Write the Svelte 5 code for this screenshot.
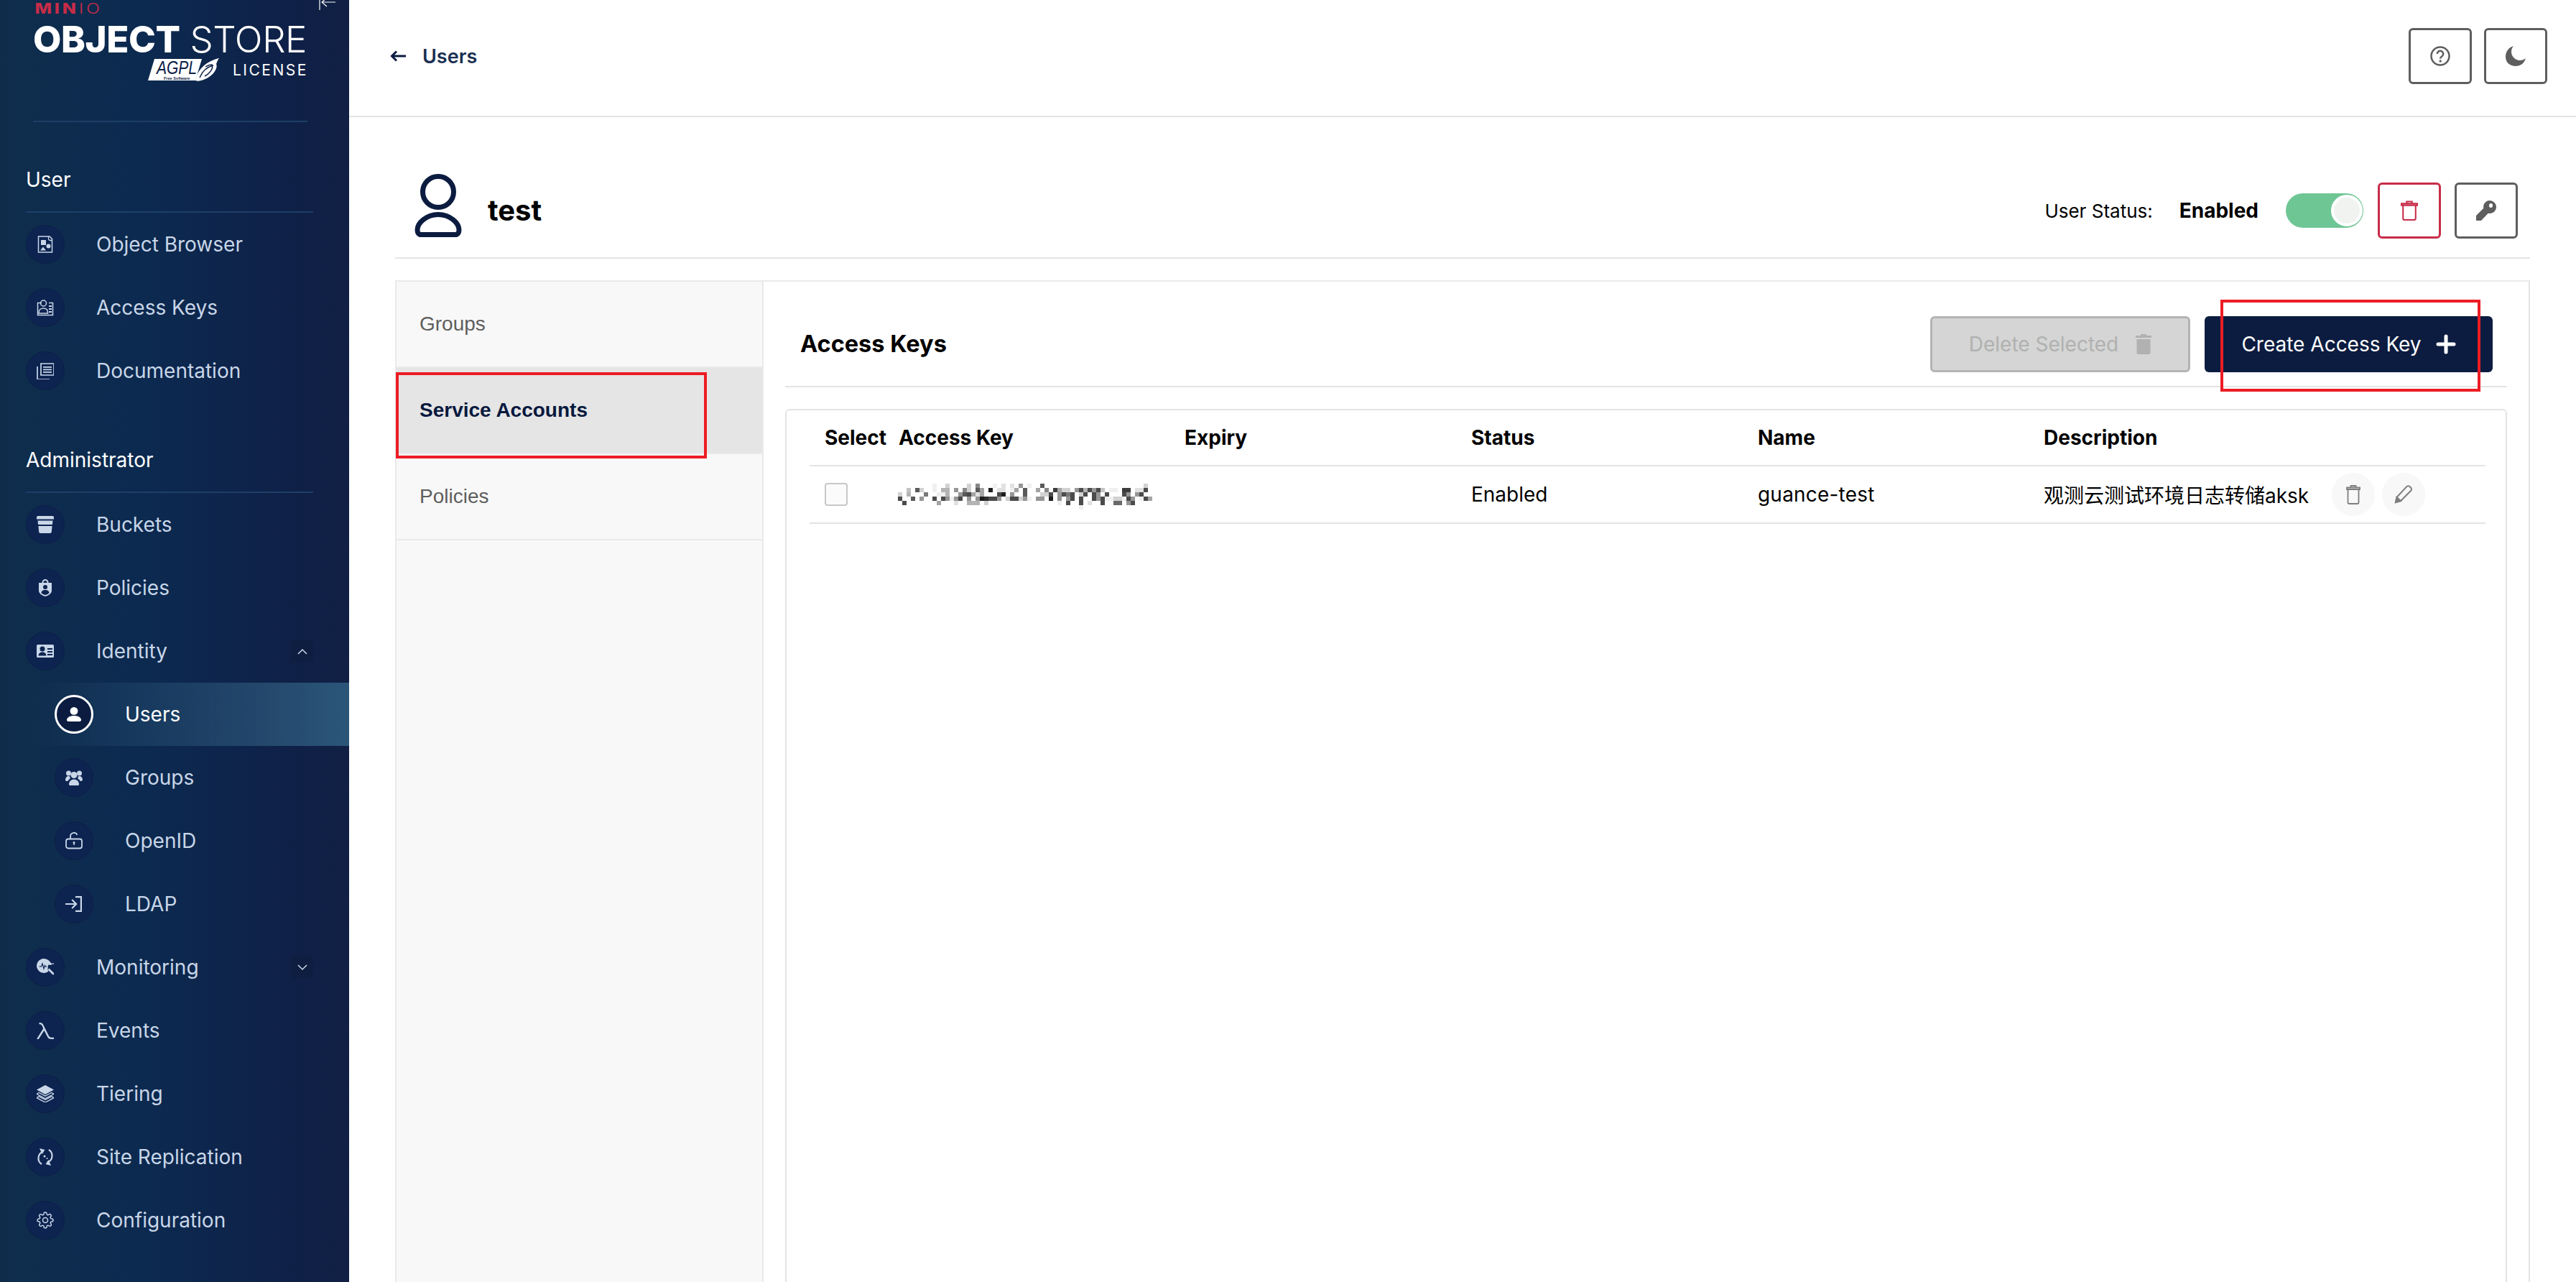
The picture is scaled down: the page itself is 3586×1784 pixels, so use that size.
<script>
  const icons = {
    object: `<path d="M2.5 1h15.5l3.5 3.5V23h-19z" fill="none" stroke="currentColor" stroke-width="1.5"/><path d="M16.5 1v3a2.5 2.5 0 0 0 2.5 2.5h2.5" fill="none" stroke="currentColor" stroke-width="1.3"/><rect x="6" y="6" width="7" height="7"/><circle cx="16.5" cy="14.5" r="3"/><path d="M5 20.5l4-5 4 5z"/>`,
    keys: `<path d="M7 5.500H1.500v17h21v-17H17" fill="none" stroke="currentColor" stroke-width="1.5"/><circle cx="9.500" cy="6" r="4" fill="none" stroke="currentColor" stroke-width="1.5"/><path d="M3 19c0-4 3-6 6.500-6s6 2 6 6v1H3z" fill="none" stroke="currentColor" stroke-width="1.5"/><path d="M17 9h4v2h-4zM17 13h4v2h-4zM17 17h4v2h-4z"/>`,
    docs: `<path d="M6 2h18v16H6z" fill="none" stroke="currentColor" stroke-width="1.700"/><path d="M9 6h12v1.800H9zM9 9.500h12v1.800H9zM9 13h12v1.800H9z"/><path d="M1 6v18h17" fill="none" stroke="currentColor" stroke-width="1.700"/>`,
    buckets: `<path d="M0 2a2 2 0 0 1 2-2h20a2 2 0 0 1 2 2v2.500H0z"/><path d="M1.500 6.500h21l-.6 5.500H2.100z"/><path d="M2.400 14h19.200l-.8 8a2 2 0 0 1-2 2H5.200a2 2 0 0 1-2-2z"/>`,
    policies: `<path fill-rule="evenodd" d="M7.500 5V4.500a4.500 4.500 0 0 1 9 0V5H21v11c0 4-5 7-9 8-4-1-9-4-9-8V5zm2 0h5v-.5a2.500 2.500 0 0 0-5 0zM12 8a3 3 0 1 0 0 6 3 3 0 0 0 0-6zm-5.500 11c1 1.500 3.500 2.500 5.500 3 2-.5 4.500-1.500 5.500-3 0-2.500-2.500-4-5.500-4s-5.500 1.500-5.500 4z"/>`,
    identity: `<path fill-rule="evenodd" d="M1.500 3h21A1.500 1.500 0 0 1 24 4.500v15a1.500 1.500 0 0 1-1.500 1.500h-21A1.500 1.500 0 0 1 0 19.500v-15A1.500 1.500 0 0 1 1.500 3zM8 5.500a3.500 3.500 0 1 0 0 7 3.500 3.500 0 0 0 0-7zM2.500 18.500h11c0-3-2.500-5-5.500-5s-5.500 2-5.500 5zM15 8v2h7V8zm0 4v2h7v-2zm0 4v2h7v-2z"/>`,
    user: `<circle cx="12" cy="6.500" r="6.500"/><path d="M2.500 24c-1.500 0-2.500-1-2.500-2.300C0 17 5.500 14.500 12 14.500s12 2.500 12 7.200c0 1.300-1 2.300-2.500 2.300z"/>`,
    groups: `<circle cx="12" cy="8.500" r="4.500"/><path d="M5 21.500c0-4 3-7 7-7s7 3 7 7c0 1-1 1.500-2 1.500H7c-1 0-2-.5-2-1.500z"/><circle cx="4.500" cy="6" r="3.500"/><circle cx="19.500" cy="6" r="3.500"/><path d="M0 15c0-3 2-5 4.500-5 .8 0 1.500.2 2 .5-.3 1-.3 2 .5 3-2 .8-3 2-3.500 3.500H1.500C.5 17 0 16 0 15zM24 15c0-3-2-5-4.500-5-.8 0-1.500.2-2 .5.3 1 .3 2-.5 3 2 .8 3 2 3.500 3.500h1c1 0 2.500-1 2.500-2z"/>`,
    openid: `<rect x="1" y="9.500" width="22" height="13" rx="3" fill="none" stroke="currentColor" stroke-width="1.800"/><path d="M7 9.500V6a5 5 0 0 1 9.500-2.200" fill="none" stroke="currentColor" stroke-width="1.800"/><circle cx="12" cy="14.500" r="1.500"/><path d="M11.200 15h1.600v3h-1.600z"/>`,
    ldap: `<path d="M14 1h9v22h-9v-2.200h6.800V3.200H14z"/><path d="M0 10.900h12.500L8.500 6.800 10 5.300l6.700 6.700-6.700 6.700-1.500-1.500 4-4.100H0z"/>`,
    monitoring: `<path d="M10 0a10 10 0 1 0 6.300 17.800L15.500 15l.5-6.300h5C19.500 3.500 15 0 10 0z"/><path d="M15.500 15.500l2-2 6.500 6.500a1.400 1.400 0 0 1-2 2z"/><path d="M17 6.500h7v1.200h-7z"/><path d="M3.500 11h3l1.500-4 2 7 1.500-4.500.8 1.500h2" fill="none" stroke="#0d2350" stroke-width="1.200"/>`,
    events: `<path d="M3.500 1C7 1 8.500 2 10 5.500l7 14c.8 1.600 2 2.200 4 2.200h3V24h-3.500c-3 0-4.500-1-5.800-3.800L10.500 12 2.800 24H0l9.200-14.800L7.800 6C6.800 3.800 6 3.200 3.500 3.200z"/>`,
    tiering: `<path d="M12 0l12 6.500L12 13 0 6.500z"/><path d="M3.300 10.500L12 15.200l8.700-4.700L24 12.300 12 18.800 0 12.300z" fill="none" stroke="currentColor" stroke-width="1.400" stroke-linejoin="round"/><path d="M3.300 15.800L12 20.500l8.700-4.700L24 17.600 12 24 0 17.600z" fill="none" stroke="currentColor" stroke-width="1.400" stroke-linejoin="round"/>`,
    replication: `<path d="M9 4.500A9.800 9.800 0 0 0 7 22" fill="none" stroke="currentColor" stroke-width="2.200"/><path d="M15 19.500A9.800 9.800 0 0 0 17 2" fill="none" stroke="currentColor" stroke-width="2.200"/><path d="M4 0l7.500 2-4 6z"/><path d="M20 24l-7.500-2 4-6z"/><circle cx="11" cy="11" r="1.500"/><circle cx="14.500" cy="14" r="1"/>`,
    gear: `<circle cx="12" cy="12" r="3.500" fill="none" stroke="currentColor" stroke-width="1.500"/><path fill="none" stroke="currentColor" stroke-width="1.500" d="M19.400 15a1.650 1.650 0 0 0 .33 1.820l.06.06a2 2 0 0 1 0 2.830 2 2 0 0 1-2.830 0l-.06-.06a1.650 1.650 0 0 0-1.820-.33 1.650 1.650 0 0 0-1 1.510V21a2 2 0 0 1-2 2 2 2 0 0 1-2-2v-.09A1.650 1.650 0 0 0 9 19.400a1.650 1.650 0 0 0-1.820.33l-.06.06a2 2 0 0 1-2.830 0 2 2 0 0 1 0-2.830l.06-.06a1.650 1.650 0 0 0 .33-1.820 1.650 1.650 0 0 0-1.510-1H3a2 2 0 0 1-2-2 2 2 0 0 1 2-2h.09A1.650 1.650 0 0 0 4.600 9a1.650 1.650 0 0 0-.33-1.820l-.06-.06a2 2 0 0 1 0-2.830 2 2 0 0 1 2.830 0l.06.06a1.650 1.650 0 0 0 1.820.33H9a1.650 1.650 0 0 0 1-1.510V3a2 2 0 0 1 2-2 2 2 0 0 1 2 2v.09a1.650 1.650 0 0 0 1 1.510 1.650 1.650 0 0 0 1.820-.33l.06-.06a2 2 0 0 1 2.830 0 2 2 0 0 1 0 2.830l-.06.06a1.650 1.650 0 0 0-.33 1.820V9a1.650 1.650 0 0 0 1.510 1H21a2 2 0 0 1 2 2 2 2 0 0 1-2 2h-.09a1.650 1.650 0 0 0-1.510 1z"/>`
  };

  const userItems = [
    { label: "Object Browser", icon: "object" },
    { label: "Access Keys", icon: "keys" },
    { label: "Documentation", icon: "docs" }
  ];

  const adminItems = [
    { label: "Buckets", icon: "buckets" },
    { label: "Policies", icon: "policies" },
    { label: "Identity", icon: "identity", chevron: "up" },
    { label: "Users", icon: "user", sub: true, active: true },
    { label: "Groups", icon: "groups", sub: true },
    { label: "OpenID", icon: "openid", sub: true },
    { label: "LDAP", icon: "ldap", sub: true },
    { label: "Monitoring", icon: "monitoring", chevron: "down" },
    { label: "Events", icon: "events" },
    { label: "Tiering", icon: "tiering" },
    { label: "Site Replication", icon: "replication" },
    { label: "Configuration", icon: "gear" }
  ];

  const tabs = ["Groups", "Service Accounts", "Policies"];
  const columns = ["Select", "Access Key", "Expiry", "Status", "Name", "Description"];

  // the blurred key from the screenshot, one hex digit per block (f = black)
  const mosaic = [
    "........1..3....3.8...1.2.2.7.1..b.......................3..",
    "..4.b3..1.55.7.83.b6.f.22.16.b..6.8.d633.7c5c7c4.11.dd.22c",
    "3.5...9..115..7bc626...cf.7..b...33c.7c9c.3c.c7.c...c7.7c",
    "c..b.7..c.c717c.7.7fecc7.3cc371.77.f.7.7c.c..c7c11331c7.1c6",
    ".c.......6...2..555.3................1.c..c.2..c..aa.7c",
    "..........................................1"
  ];

  const shade = (c) => {
    const v = 255 - parseInt(c, 16) * 15;
    return `rgb(${v},${v},${v})`;
  };
</script>

{#snippet navRow(item)}
  <div class="row" class:sub={item.sub} class:active={item.active}>
    <span class="circle">
      <svg class="nav-icon" viewBox="0 0 24 24" fill="currentColor">{@html icons[item.icon]}</svg>
    </span>
    <span class="row-label">{item.label}</span>
    {#if item.chevron}
      <span class="chevron">
        <svg width="14" height="9" viewBox="0 0 14 9" fill="none" stroke="currentColor" stroke-width="1.500">
          {#if item.chevron === "up"}
            <path d="M1 8l6-6 6 6" />
          {:else}
            <path d="M1 1l6 6 6-6" />
          {/if}
        </svg>
      </span>
    {/if}
  </div>
{/snippet}

<div class="app">
  <aside class="sidebar">
    <div class="logo">
      <div class="minio"><b>MIN</b><span>IO</span></div>
      <div class="product"><b>OBJECT</b> <span>STORE</span></div>
      <div class="license-line">
        <svg class="agpl" width="100" height="33" viewBox="0 0 100 33">
          <path d="M0 32L9 2h66l-9 30z" fill="#fff" />
          <text x="12" y="23" font-family="Liberation Sans" font-size="26" font-style="italic" font-weight="400" fill="#0c2047" textLength="56" lengthAdjust="spacingAndGlyphs">AGPL</text>
          <text x="22" y="30.500" font-family="Liberation Sans" font-size="5.500" font-weight="700" fill="#0c2047">Free Software</text>
          <path d="M66 32C69 16 82 5 99 1c-2 3-3 5-4 8 3 6-5 19-21 23-3 1-6 1-8 0z" fill="#fff" />
          <path d="M72 28c4-10 11-15 19-17M80 13c3-2 7-3 9-3 2 4-1 11-10 16" fill="none" stroke="#0c2047" stroke-width="1.500" />
        </svg>
        <span class="license">LICENSE</span>
      </div>
      <svg class="collapse" width="24" height="15" viewBox="0 0 24 15" fill="none" stroke="#fff" stroke-width="1.200">
        <path d="M1 0v14M23 3H4M11 -3L4 3l7 6" />
      </svg>
    </div>
    <div class="logo-rule"></div>

    <div class="section-title">User</div>
    {#each userItems as item}
      {@render navRow(item)}
    {/each}

    <div class="section-title">Administrator</div>
    {#each adminItems as item}
      {@render navRow(item)}
    {/each}
  </aside>

  <main class="main">
    <header class="topbar">
      <div class="back">
        <svg width="22" height="16" viewBox="0 0 22 16" fill="none" stroke="#0c1c40" stroke-width="3">
          <path d="M22 8H3M9 1.500L2.500 8 9 14.500" />
        </svg>
        <span>Users</span>
      </div>
      <div class="top-actions">
        <button class="square">
          <svg width="28" height="28" viewBox="0 0 28 28">
            <circle cx="14" cy="14" r="12.500" fill="none" stroke="#5e5e5e" stroke-width="2.500" />
            <path d="M9.800 11a4.200 4.200 0 1 1 6.500 3.500c-1.300.8-2.100 1.500-2.100 3" fill="none" stroke="#5e5e5e" stroke-width="2.500" />
            <circle cx="14.200" cy="21" r="1.700" fill="#5e5e5e" />
          </svg>
        </button>
        <button class="square">
          <svg width="28" height="28" viewBox="0 0 28 28">
            <path d="M11 0C4 2 0 8 0 15c0 8 6 13 14 13 7 0 12-4 14-11-2 2-5 3-8 3C13 20 8 14 8 8c0-3 1-6 3-8z" fill="#5e5e5e" />
          </svg>
        </button>
      </div>
    </header>

    <div class="content">
      <div class="title-row">
        <div class="title-left">
          <svg width="66" height="88" viewBox="0 0 66 88" fill="none" stroke="#0c1c40" stroke-width="7">
            <circle cx="33" cy="25" r="21.500" />
            <path d="M33 56.500C17 56.500 4 68 4 78c0 4 2 6.500 5 6.500h48c3 0 5-2.500 5-6.500 0-10-13-21.500-29-21.500z" />
          </svg>
          <span class="name">test</span>
        </div>
        <div class="title-right">
          <span class="status-label">User Status:</span>
          <span class="status-value">Enabled</span>
          <span class="toggle"><span class="knob"></span></span>
          <button class="square danger">
            <svg width="24" height="30" viewBox="0 0 26 30" fill="none" stroke="#c72c48" stroke-width="2.200">
              <path d="M1 7V4.500h24V7zM9 4.500V1.500h8v3M3.500 7v20a2 2 0 0 0 2 2h15a2 2 0 0 0 2-2V7" />
            </svg>
          </button>
          <button class="square">
            <svg width="28" height="28" viewBox="0 0 28 28">
              <path fill-rule="evenodd" d="M19 0a9 9 0 0 1 9 9c0 5-4 9-9 9-.7 0-1.500-.1-2.200-.3L7 28H0v-7l10.300-10.200A9 9 0 0 1 19 0zm1.500 4a2.500 3 0 1 0 0 6 2.500 3 0 0 0 0-6z" fill="#5e5e5e" />
            </svg>
          </button>
        </div>
      </div>

      <div class="panel">
        <nav class="tabs">
          {#each tabs as tab, i}
            <div class="tab" class:selected={i === 1}>{tab}</div>
          {/each}
        </nav>
        <section class="pane">
          <div class="pane-head">
            <h2>Access Keys</h2>
            <div class="pane-actions">
              <button class="wide disabled">
                Delete Selected
                <svg width="22" height="28" viewBox="0 0 22 28" fill="#b0b1b0">
                  <path d="M7 0h8v2h7v3H0V2h7zM1.500 7h19v19a2 2 0 0 1-2 2h-15a2 2 0 0 1-2-2z" />
                </svg>
              </button>
              <button class="wide primary">
                Create Access Key
                <svg width="28" height="28" viewBox="0 0 28 28" fill="none" stroke="#fff" stroke-width="5" stroke-linecap="round">
                  <path d="M14 3v22M3 14h22" />
                </svg>
              </button>
            </div>
          </div>

          <div class="card">
            <div class="grid-row head">
              {#each columns as col, i}
                <div class:first={i === 0}>{col}</div>
              {/each}
            </div>
            <div class="grid-row">
              <div class="first"><span class="checkbox"></span></div>
              <div>
                <svg class="blur" width="360" height="42" viewBox="0 0 360 42">
                  {#each mosaic as line, y}
                    {#each line.split("") as c, x}
                      {#if c !== "."}
                        <rect x={x * 6} y={y * 6} width="6" height="6" fill={shade(c)} />
                      {/if}
                    {/each}
                  {/each}
                </svg>
              </div>
              <div></div>
              <div>Enabled</div>
              <div class="loose">guance-test</div>
              <div class="desc">
                <span class="desc-text">观测云测试环境日志转储aksk</span>
                <span class="round">
                  <svg width="20" height="27" viewBox="0 0 20 27" fill="none" stroke="#7e7e7e" stroke-width="1.800">
                    <path d="M1 6V3.500h18V6zM6.500 3.500V1h7v2.500M2.500 6v18a2 2 0 0 0 2 2h11a2 2 0 0 0 2-2V6" />
                  </svg>
                </span>
                <span class="round">
                  <svg width="26" height="26" viewBox="0 0 26 26" fill="none" stroke="#7e7e7e" stroke-width="2">
                    <path d="M2 24l1.500-7L17 2.500a3 3 0 0 1 5 0l1 1a3 3 0 0 1 0 4.500L9 22z" />
                    <path d="M2 24l1.500-7L9 22z" fill="#7e7e7e" />
                  </svg>
                </span>
              </div>
            </div>
          </div>
        </section>
      </div>
    </div>
  </main>

  <div class="mark mark-tab"></div>
  <div class="mark mark-create"></div>
</div>

<style>
  :global(body) {
    margin: 0;
    background: #fff;
  }

  .app {
    position: relative;
    display: flex;
    width: 3586px;
    height: 1784px;
    overflow: hidden;
    font-family: "Inter", "Noto Sans CJK SC", sans-serif;
    font-size: 28px;
    color: #000;
  }

  .sidebar {
    flex: 0 0 486px;
    display: flex;
    flex-direction: column;
    background: linear-gradient(90deg, #0f2d4b 0%, #0c2a50 40%, #0f2047 85%, #112044 100%);
    color: #c8d6e8;
  }

  .logo {
    position: relative;
    height: 168px;
    padding-left: 46px;
    box-sizing: border-box;
    color: #fff;
  }

  .minio {
    height: 30px;
    padding-left: 2px;
    font-size: 20px;
    line-height: 24px;
    letter-spacing: 3px;
    color: #c72c48;
    transform: scaleX(1.25);
    transform-origin: 0 0;
  }

  .minio b {
    font-weight: 800;
  }

  .minio span {
    font-weight: 300;
  }

  .product {
    font-size: 51px;
    line-height: 50px;
    white-space: nowrap;
    letter-spacing: -0.4px;
  }

  .product b {
    font-weight: 800;
  }

  .product span {
    font-weight: 300;
  }

  .license-line {
    display: flex;
    align-items: center;
    margin-left: 160px;
    gap: 18px;
  }

  .license {
    font-size: 21px;
    letter-spacing: 2.500px;
    margin-top: 2px;
  }

  .collapse {
    position: absolute;
    top: 0;
    left: 444px;
  }

  .logo-rule {
    height: 2px;
    margin: 0 58px 0 46px;
    background: #1d3f66;
  }

  .section-title {
    height: 126px;
    box-sizing: border-box;
    width: 400px;
    margin-left: 36px;
    padding-bottom: 27px;
    display: flex;
    align-items: flex-end;
    border-bottom: 2px solid #1d3f66;
    color: #fff;
    line-height: 34px;
  }

  .row {
    flex: 0 0 88px;
    height: 88px;
    display: flex;
    align-items: center;
    gap: 44px;
    padding: 0 50px 0 36px;
  }

  .row.sub {
    padding-left: 76px;
  }

  .row.active {
    background: linear-gradient(90deg, rgba(43, 86, 121, 0) 8%, #2b5679 100%);
    color: #fff;
  }

  .circle {
    flex: 0 0 54px;
    width: 54px;
    height: 54px;
    box-sizing: border-box;
    display: flex;
    align-items: center;
    justify-content: center;
    border-radius: 50%;
    background: #0d2350;
    border: 1px solid #0c1f48;
  }

  .row.active .circle {
    background: #0c1c40;
    border: 3px solid #fff;
  }

  .nav-icon {
    width: 24px;
    height: 24px;
  }

  .row.active .nav-icon {
    width: 20px;
  }

  .chevron {
    margin-left: auto;
    width: 31px;
    height: 30px;
    display: flex;
    align-items: center;
    justify-content: center;
    border-radius: 4px;
    background: #0e1e41;
  }

  .main {
    flex: 1;
    display: flex;
    flex-direction: column;
    min-width: 0;
  }

  .topbar {
    flex: 0 0 163px;
    box-sizing: border-box;
    display: flex;
    align-items: center;
    justify-content: space-between;
    padding: 0 40px 5px 57px;
    border-bottom: 2px solid #e4e4e4;
  }

  .back {
    display: flex;
    align-items: center;
    gap: 23px;
    font-weight: 600;
    font-size: 27px;
    color: #1a2f52;
  }

  .top-actions {
    display: flex;
    gap: 17px;
  }

  button {
    font-family: inherit;
    font-size: inherit;
    padding: 0;
    cursor: pointer;
  }

  .square {
    width: 88px;
    height: 78px;
    display: flex;
    align-items: center;
    justify-content: center;
    background: #fff;
    border: 3px solid #5e5e5e;
    border-radius: 6px;
  }

  .square.danger {
    border-color: #c72c48;
  }

  .content {
    flex: 1;
    display: flex;
    flex-direction: column;
    padding: 0 64px;
    min-height: 0;
  }

  .title-row {
    flex: 0 0 197px;
    box-sizing: border-box;
    display: flex;
    align-items: flex-end;
    justify-content: space-between;
    padding: 0 17px 26px 27px;
    border-bottom: 2px solid #e4e4e4;
  }

  .title-left {
    display: flex;
    align-items: center;
    gap: 36px;
    margin-bottom: 2px;
  }

  .name {
    font-size: 40px;
    font-weight: 700;
    margin-top: 12px;
  }

  .title-right {
    display: flex;
    align-items: center;
  }

  .status-label {
    font-size: 26px;
  }

  .status-value {
    margin-left: 37px;
    font-weight: 700;
  }

  .toggle {
    margin: 0 20px 0 38px;
    width: 108px;
    height: 48px;
    box-sizing: border-box;
    padding: 2px 1px;
    display: flex;
    justify-content: flex-end;
    border-radius: 24px;
    background: #6fc695;
  }

  .knob {
    width: 44px;
    height: 44px;
    box-sizing: border-box;
    border-radius: 50%;
    background: #f1f3f1;
    border: 4px solid #fff;
  }

  .title-right .square + .square {
    margin-left: 19px;
  }

  .panel {
    flex: 1;
    margin-top: 30px;
    display: flex;
    min-height: 0;
    border-top: 2px solid #eaeaea;
    border-right: 2px solid #e4e4e4;
  }

  .tabs {
    flex: 0 0 513px;
    box-sizing: border-box;
    background: #f8f8f8;
    border-left: 2px solid #eaeaea;
    border-right: 2px solid #eaeaea;
    font-family: "Liberation Sans", sans-serif;
    color: #5e5e5e;
  }

  .tab {
    height: 120px;
    box-sizing: border-box;
    display: flex;
    align-items: center;
    padding-left: 32px;
    border-bottom: 2px solid #eaeaea;
  }

  .tab.selected {
    background: #e5e5e5;
    color: #07193e;
    font-weight: 700;
  }

  .pane {
    flex: 1;
    min-width: 0;
    display: flex;
    flex-direction: column;
    padding: 0 30px;
  }

  .pane-head {
    flex: 0 0 147px;
    box-sizing: border-box;
    display: flex;
    align-items: center;
    justify-content: space-between;
    padding: 28px 20px 0 21px;
    border-bottom: 2px solid #e4e4e4;
  }

  h2 {
    margin: 0;
    font-size: 32.500px;
    font-weight: 700;
  }

  .pane-actions {
    display: flex;
    gap: 20px;
  }

  .wide {
    height: 78px;
    display: flex;
    align-items: center;
    justify-content: center;
    gap: 20px;
    border-radius: 6px;
    box-sizing: border-box;
  }

  .disabled {
    width: 362px;
    background: #d4d5d4;
    border: 3px solid #b4b4b4;
    color: #b0b1b0;
    gap: 24px;
  }

  .primary {
    width: 401px;
    background: #0c1c40;
    border: 0;
    color: #fff;
  }

  .card {
    flex: 1;
    margin-top: 30px;
    padding: 0 28px 0 32px;
    border: 2px solid #e4e4e4;
    border-bottom: 0;
    border-radius: 6px 6px 0 0;
  }

  .grid-row {
    display: grid;
    grid-template-columns: 124px 398px 399px 399px 398px 1fr;
    align-items: center;
    height: 80px;
    border-bottom: 2px solid #e4e4e4;
    box-sizing: border-box;
  }

  .grid-row.head {
    height: 78px;
    font-weight: 700;
  }

  .first {
    padding-left: 21px;
  }

  .loose {
    letter-spacing: 0.200px;
  }

  .checkbox {
    display: block;
    width: 32px;
    height: 32px;
    box-sizing: border-box;
    background: #fbfbfb;
    border: 2px solid #c8c8c8;
    border-radius: 4px;
  }

  .blur {
    display: block;
    margin: 12px 0 0 -1px;
  }

  .desc {
    display: flex;
    align-items: center;
    gap: 10px;
  }

  .desc-text {
    margin-right: 22px;
    white-space: nowrap;
  }

  .round {
    flex: 0 0 60px;
    height: 60px;
    display: flex;
    align-items: center;
    justify-content: center;
    border-radius: 50%;
    background: #f8f8f8;
  }

  .mark {
    position: absolute;
    box-sizing: border-box;
    border: 4px solid #ed1c24;
  }

  .mark-tab {
    left: 551px;
    top: 518px;
    width: 433px;
    height: 120px;
  }

  .mark-create {
    left: 3091px;
    top: 417px;
    width: 362px;
    height: 128px;
  }
</style>
